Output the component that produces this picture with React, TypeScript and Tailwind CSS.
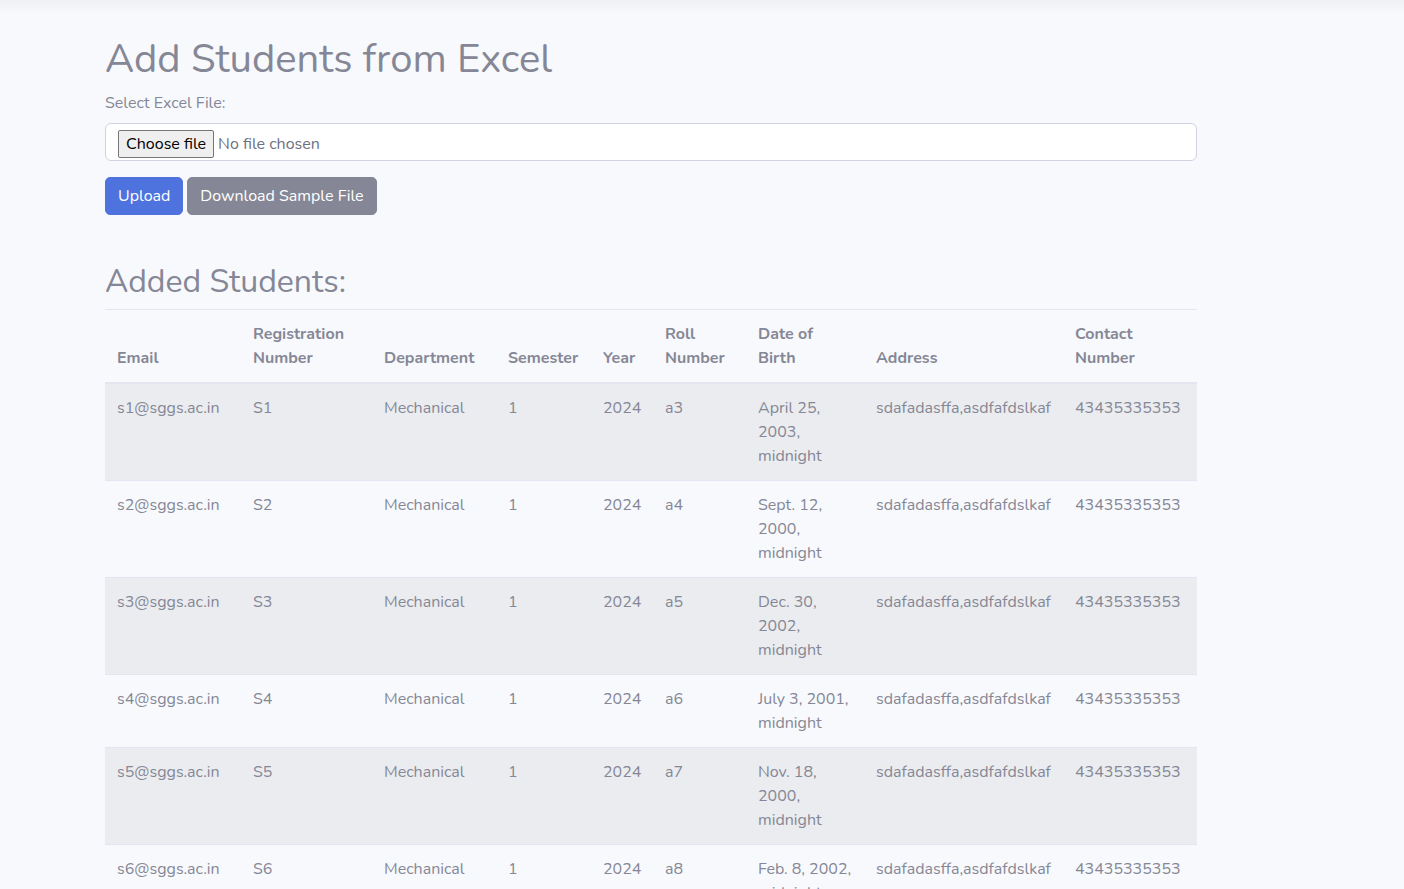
const students = [
  { email: "s1@sggs.ac.in", reg: "S1", roll: "a3", dob: ["April 25,", "2003,", "midnight"] },
  { email: "s2@sggs.ac.in", reg: "S2", roll: "a4", dob: ["Sept. 12,", "2000,", "midnight"] },
  { email: "s3@sggs.ac.in", reg: "S3", roll: "a5", dob: ["Dec. 30,", "2002,", "midnight"] },
  { email: "s4@sggs.ac.in", reg: "S4", roll: "a6", dob: ["July 3, 2001,", "midnight"] },
  { email: "s5@sggs.ac.in", reg: "S5", roll: "a7", dob: ["Nov. 18,", "2000,", "midnight"] },
  { email: "s6@sggs.ac.in", reg: "S6", roll: "a8", dob: ["Feb. 8, 2002,", "midnight"] },
  { email: "s7@sggs.ac.in", reg: "S7", roll: "a9", dob: ["May 14,", "2001,", "midnight"] },
];

const headers: { lines: string[]; w: string }[] = [
  { lines: ["Email"], w: "w-[136px]" },
  { lines: ["Registration", "Number"], w: "w-[131px]" },
  { lines: ["Department"], w: "w-[124px]" },
  { lines: ["Semester"], w: "w-[95px]" },
  { lines: ["Year"], w: "w-[62px]" },
  { lines: ["Roll", "Number"], w: "w-[93px]" },
  { lines: ["Date of", "Birth"], w: "w-[118px]" },
  { lines: ["Address"], w: "w-[199px]" },
  { lines: ["Contact", "Number"], w: "w-[134px]" },
];

export default function App() {
  return (
    <div className="min-h-screen bg-[#f8f9fc] text-[#858796] font-['Nunito','Lato','Open_Sans',sans-serif]">
      {/* topbar shadow */}
      <div className="h-[14px] bg-gradient-to-b from-[#eff0f4] to-[#f8f9fc]" />

      <div className="w-[1092px] ml-[105px]">
        <h1 className="text-[40px] leading-[48px] mt-[21px] mb-[8px] font-normal">
          Add Students from Excel
        </h1>

        <form>
          <div className="mb-[16px]">
            <label className="block text-[16px] leading-[24px] mb-[8px]">Select Excel File:</label>
            <div className="flex items-start h-[38px] bg-white border border-[#d1d3e2] rounded-[6px] pl-[12px] pt-[6px]">
              <span className="inline-flex items-center h-[28px] px-[7px] bg-[#efefef] border border-[#767676] rounded-[2px] text-black text-[16px]">
                Choose file
              </span>
              <span className="ml-[4px] h-[28px] inline-flex items-center text-[16px] text-[#6e707e]">
                No file chosen
              </span>
            </div>
          </div>

          <div className="flex gap-[4px]">
            <button
              type="button"
              className="h-[38px] px-[12px] rounded-[5px] bg-[#4e73df] border border-[#4e73df] text-white text-[16px]"
            >
              Upload
            </button>
            <button
              type="button"
              className="h-[38px] px-[12px] rounded-[5px] bg-[#858796] border border-[#858796] text-white text-[16px]"
            >
              Download Sample File
            </button>
          </div>
        </form>

        <h2 className="text-[32px] leading-[38px] mt-[48px] mb-[8px] font-normal">Added Students:</h2>

        <table className="w-full table-fixed border-collapse text-[16px] leading-[24px]">
          <colgroup>
            {headers.map((h, i) => (
              <col key={i} className={h.w} />
            ))}
          </colgroup>
          <thead>
            <tr>
              {headers.map((h, i) => (
                <th
                  key={i}
                  className="align-bottom text-left font-bold px-[12px] py-[12px] border-t border-b-2 border-[#e3e6f0]"
                >
                  {h.lines.map((l) => (
                    <div key={l}>{l}</div>
                  ))}
                </th>
              ))}
            </tr>
          </thead>
          <tbody>
            {students.map((s, i) => (
              <tr key={s.email} className={i % 2 === 0 ? "bg-[#ebecef]" : ""}>
                <td className="align-top px-[12px] py-[12px] border-t border-[#e3e6f0]">{s.email}</td>
                <td className="align-top px-[12px] py-[12px] border-t border-[#e3e6f0]">{s.reg}</td>
                <td className="align-top px-[12px] py-[12px] border-t border-[#e3e6f0]">Mechanical</td>
                <td className="align-top px-[12px] py-[12px] border-t border-[#e3e6f0]">1</td>
                <td className="align-top px-[12px] py-[12px] border-t border-[#e3e6f0]">2024</td>
                <td className="align-top px-[12px] py-[12px] border-t border-[#e3e6f0]">{s.roll}</td>
                <td className="align-top px-[12px] py-[12px] border-t border-[#e3e6f0]">
                  {s.dob.map((l) => (
                    <div key={l} className="whitespace-nowrap">{l}</div>
                  ))}
                </td>
                <td className="align-top px-[12px] py-[12px] border-t border-[#e3e6f0] whitespace-nowrap">
                  sdafadasffa,asdfafdslkaf
                </td>
                <td className="align-top px-[12px] py-[12px] border-t border-[#e3e6f0]">43435335353</td>
              </tr>
            ))}
          </tbody>
        </table>
      </div>
    </div>
  );
}
